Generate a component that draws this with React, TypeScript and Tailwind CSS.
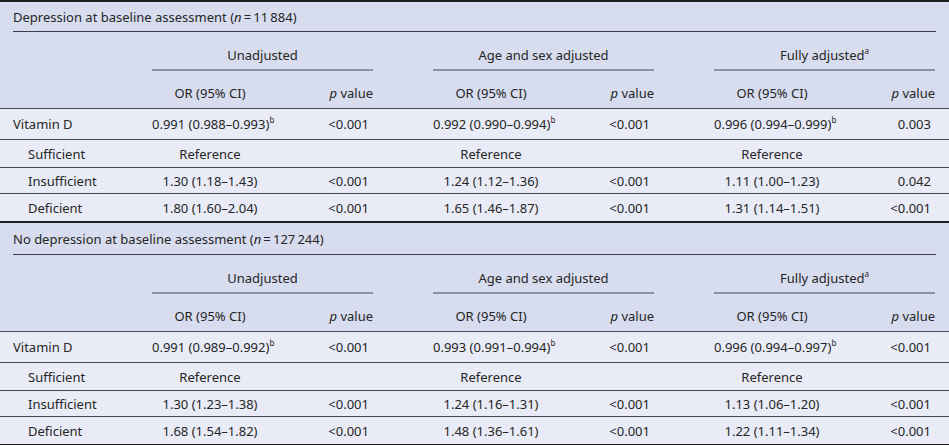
import type { ReactNode } from 'react';

type Cell = { or: string; sup?: boolean; p?: string };
type Row = { label: string; sub?: boolean; cells: Cell[] };
type Section = { title: ReactNode; captionH: string; rows: Row[] };

const ref: Cell[] = [{ or: 'Reference' }, { or: 'Reference' }, { or: 'Reference' }];

const sections: Section[] = [
  {
    title: (
      <>
        Depression at baseline assessment (<i>n</i>{'\u2009=\u200911\u2009884'})
      </>
    ),
    captionH: 'h-[29px]',
    rows: [
      {
        label: 'Vitamin D',
        cells: [
          { or: '0.991 (0.988–0.993)', sup: true, p: '<0.001' },
          { or: '0.992 (0.990–0.994)', sup: true, p: '<0.001' },
          { or: '0.996 (0.994–0.999)', sup: true, p: '0.003' },
        ],
      },
      { label: 'Sufficient', sub: true, cells: ref },
      {
        label: 'Insufficient',
        sub: true,
        cells: [
          { or: '1.30 (1.18–1.43)', p: '<0.001' },
          { or: '1.24 (1.12–1.36)', p: '<0.001' },
          { or: '1.11 (1.00–1.23)', p: '0.042' },
        ],
      },
      {
        label: 'Deficient',
        sub: true,
        cells: [
          { or: '1.80 (1.60–2.04)', p: '<0.001' },
          { or: '1.65 (1.46–1.87)', p: '<0.001' },
          { or: '1.31 (1.14–1.51)', p: '<0.001' },
        ],
      },
    ],
  },
  {
    title: (
      <>
        No depression at baseline assessment (<i>n</i>{'\u2009=\u2009127\u2009244'})
      </>
    ),
    captionH: 'h-[31px]',
    rows: [
      {
        label: 'Vitamin D',
        cells: [
          { or: '0.991 (0.989–0.992)', sup: true, p: '<0.001' },
          { or: '0.993 (0.991–0.994)', sup: true, p: '<0.001' },
          { or: '0.996 (0.994–0.997)', sup: true, p: '<0.001' },
        ],
      },
      { label: 'Sufficient', sub: true, cells: ref },
      {
        label: 'Insufficient',
        sub: true,
        cells: [
          { or: '1.30 (1.23–1.38)', p: '<0.001' },
          { or: '1.24 (1.16–1.31)', p: '<0.001' },
          { or: '1.13 (1.06–1.20)', p: '<0.001' },
        ],
      },
      {
        label: 'Deficient',
        sub: true,
        cells: [
          { or: '1.68 (1.54–1.82)', p: '<0.001' },
          { or: '1.48 (1.36–1.61)', p: '<0.001' },
          { or: '1.22 (1.11–1.34)', p: '<0.001' },
        ],
      },
    ],
  },
];

const groups: ReactNode[] = [
  'Unadjusted',
  'Age and sex adjusted',
  <>
    Fully adjusted<sup className="relative -top-[6px] text-[8px]">a</sup>
  </>,
];

// vitamin D / sufficient / insufficient / deficient
const rowHeights = [
  'h-[31px] border-b border-[#4a4a4a]',
  'h-[28px] border-b border-[#4a4a4a]',
  'h-[26px] border-b border-[#4a4a4a]',
  'h-[27px]',
];

function Spacer() {
  return <div className="w-[60px] shrink-0" />;
}

function SectionBlock({ section }: { section: Section }) {
  return (
    <div className="border-t-2 border-[#1f1f1f]">
      <div className="bg-[#d7ddee]">
        <div className={`flex items-center px-[13px] ${section.captionH}`}>{section.title}</div>
        <div className="mx-[13px] h-px bg-[#3a3e4a]" />
        {/* spanner row */}
        <div className="flex h-[39px]">
          <div className="w-[152px] shrink-0" />
          {groups.map((g, i) => (
            <div key={i} className="flex">
              {i > 0 && <Spacer />}
              <div className="h-full w-[221px] border-b-2 border-[#8d92a3] pt-[14px] text-center">
                {g}
              </div>
            </div>
          ))}
        </div>
        {/* column heads */}
        <div className="flex h-[38px] border-b border-[#4a4a4a]">
          <div className="w-[152px] shrink-0" />
          {groups.map((_, i) => (
            <div key={i} className="flex">
              {i > 0 && <Spacer />}
              <div className="w-[116px] pt-[13px] text-center">OR (95% CI)</div>
              <div className="w-[105px] pt-[13px] text-right">
                <i>p</i> value
              </div>
            </div>
          ))}
        </div>
      </div>
      <div className="bg-[#e9ecf6]">
        {section.rows.map((row, r) => (
          <div key={row.label} className={`flex items-center ${rowHeights[r]}`}>
            <div className={`w-[152px] shrink-0 ${row.sub ? 'pl-[28px]' : 'pl-[13px]'}`}>{row.label}</div>
            {row.cells.map((c, i) => (
              <div key={i} className="flex">
                {i > 0 && <Spacer />}
                <div className="w-[116px] whitespace-nowrap text-center">
                  {c.or}
                  {c.sup && <sup className="relative -top-[6px] text-[8px]">b</sup>}
                </div>
                <div className="w-[105px] pr-[4px] text-right">{c.p}</div>
              </div>
            ))}
          </div>
        ))}
      </div>
    </div>
  );
}

export default function App() {
  return (
    <div className="h-[445px] w-[949px] overflow-hidden bg-[#e9ecf6] font-['Noto_Sans',sans-serif] text-[13px] leading-[18px] text-[#262626]">
      <div className="border-b-2 border-[#1f1f1f]">
        {sections.map((s, i) => (
          <SectionBlock key={i} section={s} />
        ))}
      </div>
    </div>
  );
}
